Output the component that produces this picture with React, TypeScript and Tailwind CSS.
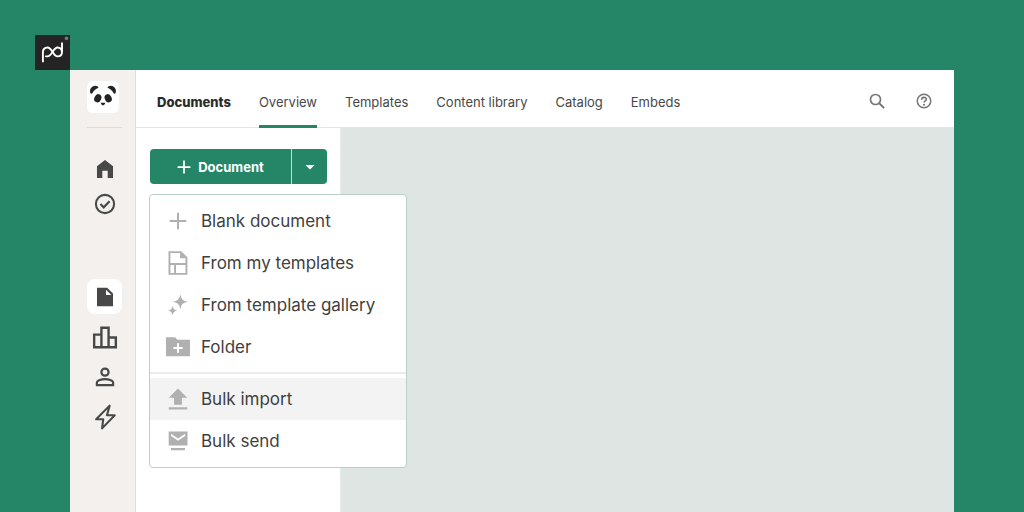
import type { ReactNode } from 'react';

type IconProps = { children: ReactNode; className?: string };

function Icon({ children, className = 'size-6' }: IconProps) {
  return (
    <svg viewBox="0 0 24 24" fill="currentColor" aria-hidden="true" className={`shrink-0 ${className}`}>
      {children}
    </svg>
  );
}

function BrandLogo() {
  return (
    <svg viewBox="0 0 35 35" role="img" aria-label="PandaDoc" className="block size-[35px] bg-[#242424]">
      <g fill="none" stroke="#fff" strokeWidth="1.900">
        <path d="M7.900 27.200V17c0-2.700 1.900-4.500 4.400-4.500 5.200 0 5.400 8.900 10.400 8.900 2.600 0 4.300-1.900 4.300-4.400V7.600" />
        <path d="M27 17c0-2.700-1.800-4.500-4.300-4.500-5 0-5.200 8.900-10.400 8.900-.9 0-1.500-.1-2.100-.4" />
      </g>
      <circle cx="31.500" cy="3.300" r="1.400" fill="#777" stroke="#999" strokeWidth=".6" />
    </svg>
  );
}

function Panda() {
  return (
    <svg viewBox="0 0 32 32" role="img" aria-label="Home workspace" className="block size-8 rounded-md bg-white">
      <g fill="#242424">
        <path d="M3.500 12.300C2 8.500 4.500 4.800 8.200 4.700c1.800 0 3 .8 3.300 2C8.800 7.800 6.400 9.500 5.400 12.300c-.6.500-1.400.500-1.900 0Z" />
        <path d="M28.500 12.300c1.500-3.800-1-7.500-4.700-7.600-1.800 0-3 .8-3.300 2 2.700 1.100 5.100 2.800 6.100 5.600.6.500 1.400.500 1.900 0Z" />
        <ellipse cx="10.800" cy="17.300" rx="3.400" ry="4.200" transform="rotate(28 10.800 17.300)" />
        <ellipse cx="21.200" cy="17.300" rx="3.400" ry="4.200" transform="rotate(-28 21.200 17.300)" />
        <path d="M13.800 21.800h4.400c0 1.300-1.200 2.400-2.200 2.700-1-.3-2.200-1.400-2.200-2.700Z" />
      </g>
    </svg>
  );
}

type SideButtonProps = { label: string; children: ReactNode; className?: string };

function SideButton({ label, children, className = 'h-[35px]' }: SideButtonProps) {
  return (
    <button type="button" aria-label={label} className={`flex w-full items-center justify-center ${className}`}>
      <Icon className="size-[26px]">{children}</Icon>
    </button>
  );
}

function Sidebar() {
  return (
    <aside className="w-[66px] shrink-0 border-r border-[#dfdcda] bg-[#f3f0ed] pl-[17px] pt-[11px] text-[#484848]">
      <nav aria-label="Main" className="flex w-[35px] flex-col">
        <Panda />
        <hr className="mt-[14px] border-[#dedbd8]" />
        <div className="mt-[23px]">
          <SideButton label="Home">
            <path d="M12 3.800 4.600 9.500v10.800h4.900v-6.700h5v6.700h4.900V9.500z" />
          </SideButton>
          <SideButton label="Tasks">
            <circle cx="12" cy="12" r="8.400" fill="none" stroke="currentColor" strokeWidth="1.900" />
            <path d="m7.800 12.100 3 3 5.400-5.600" fill="none" stroke="currentColor" strokeWidth="2" />
          </SideButton>
        </div>
        <div className="mt-[58px]">
          <SideButton label="Documents" className="h-[35px] rounded-lg bg-white">
            <path fillRule="evenodd" d="M4.600 3.500h9.400l5.400 5.300v11.700H4.600zM12.900 5.200v4.900h5z" />
          </SideButton>
        </div>
        <div className="mt-[3px]">
          <SideButton label="Reports" className="h-10">
            <path
              d="M2 9.800h6.700V21.500H2zM8.700 3.500h6.600v18H8.700zM15.300 12.500h6.700v9h-6.700z"
              fill="none"
              stroke="currentColor"
              strokeWidth="2.200"
            />
          </SideButton>
          <SideButton label="Contacts" className="h-10">
            <circle cx="12" cy="7.500" r="3.300" fill="none" stroke="currentColor" strokeWidth="2" />
            <path
              d="M4.500 19.500v-2.200c0-2.400 4.500-3.400 7.500-3.400s7.500 1 7.500 3.400v2.200z"
              fill="none"
              stroke="currentColor"
              strokeWidth="2"
            />
          </SideButton>
          <SideButton label="Automations" className="h-10">
            <path
              d="M16.300 1.500 3.800 14h6.600L9.300 22.500 21 10.400h-7.200z"
              fill="none"
              stroke="currentColor"
              strokeWidth="1.900"
              strokeLinejoin="round"
            />
          </SideButton>
        </div>
      </nav>
    </aside>
  );
}

const TABS = ['Overview', 'Templates', 'Content library', 'Catalog', 'Embeds'];

function TopBar() {
  return (
    <header className="flex h-[58px] shrink-0 border-b border-[#e4e6e5] bg-white pl-[21px] pr-[21px]">
      <nav aria-label="Documents" className="-mb-px flex gap-7 text-[13px] text-[#484848]">
        <h1 className="flex items-center pt-2 font-extrabold text-[#2b2b2b]">Documents</h1>
        {TABS.map((tab, index) => (
          <a
            key={tab}
            href="#"
            aria-current={index === 0 ? 'page' : undefined}
            className={`flex items-center whitespace-nowrap border-b-[3px] pt-[11px] ${
              index === 0 ? 'border-[#258667]' : 'border-transparent'
            }`}
          >
            {tab}
          </a>
        ))}
      </nav>
      <div className="ml-auto flex items-center gap-[29px] pt-[5px] text-[#757575]">
        <button type="button" aria-label="Search">
          <Icon className="size-[18px]">
            <circle cx="10" cy="10" r="6.700" fill="none" stroke="currentColor" strokeWidth="2.200" />
            <path d="m15 15 6.500 6.500" stroke="currentColor" strokeWidth="2.500" />
          </Icon>
        </button>
        <button type="button" aria-label="Help">
          <Icon className="size-[18px]">
            <circle cx="12" cy="12" r="9" fill="none" stroke="currentColor" strokeWidth="2" />
            <path
              d="M8.900 10.200c0-4 6.300-4 6.300-.4 0 2.100-3.100 2.100-3.100 4.200"
              fill="none"
              stroke="currentColor"
              strokeWidth="2.100"
            />
            <circle cx="12.100" cy="16.900" r="1.400" />
          </Icon>
        </button>
      </div>
    </header>
  );
}

type MenuItemProps = { label: string; active?: boolean; children: ReactNode };

function MenuItem({ label, active = false, children }: MenuItemProps) {
  return (
    <button
      type="button"
      role="menuitem"
      className={`flex h-[42px] w-full items-center gap-[11px] whitespace-nowrap pl-4 text-left text-[#3f3f3f] ${
        active ? 'bg-[#f3f3f3]' : 'bg-white'
      }`}
    >
      <Icon className="size-6 text-[#b0b0b0]">{children}</Icon>
      <span className="pt-[2px]">{label}</span>
    </button>
  );
}

function CreateMenu() {
  return (
    <div
      role="menu"
      className="absolute -left-px top-full z-10 mt-[10px] w-[258px] rounded-[4px] border border-[#b9d0c8] bg-white py-[5px] text-[17px]"
    >
      <MenuItem label="Blank document">
        <path d="M11 3.700h2V11h7.300v2H13v7.300h-2V13H3.700v-2H11z" />
      </MenuItem>
      <MenuItem label="From my templates">
        <path
          fillRule="evenodd"
          d="M2.500.200h12.700l6.200 6v17.600H2.500zM4.400 2.100v10h15.100V7.300h-5.400V2.100zM4.400 14v7.900h3.700V14zM10 14v7.900h9.500V14z"
        />
      </MenuItem>
      <MenuItem label="From template gallery">
        <path d="M14.300 1c.8 5.200 2.400 6.900 7.700 7.800-5.300.9-6.900 2.700-7.700 7.700-.8-5-2.400-6.800-7.700-7.700C11.900 7.900 13.500 6.200 14.300 1Z" />
        <path d="M6.600 12.700c.5 3.100 1.700 4.300 4.800 4.900-3.100.6-4.300 1.800-4.800 5-.5-3.200-1.700-4.400-4.800-5 3.100-.6 4.300-1.800 4.800-4.900Z" />
      </MenuItem>
      <MenuItem label="Folder">
        <path
          fillRule="evenodd"
          d="M0 2.300h9l2.500 2.500H24v16.500H0zM11 8.300v3.600H7.300v2H11v3.800h2v-3.800h3.700v-2H13V8.300z"
        />
      </MenuItem>
      <hr className="my-1 border-t-2 border-[#ececec]" />
      <MenuItem label="Bulk import" active>
        <path d="m12 1.500 9.200 9.200h-5.300v7H8.100v-7H2.800zM2.700 20.300h18.600v2.100H2.700z" />
      </MenuItem>
      <MenuItem label="Bulk send">
        <path
          fillRule="evenodd"
          d="M2.700 2.500h18.800v14H2.700zM5 4.800v2.300l7.100 4.700 7-4.700V4.800l-7 4.600zM5 19h14v2.200H5z"
        />
      </MenuItem>
    </div>
  );
}

function CreateButton() {
  return (
    <div className="relative flex h-[35px] w-[177px] text-white">
      <button
        type="button"
        className="flex flex-1 items-center justify-center gap-[7px] rounded-l-[4px] bg-[#258667] text-[13px] font-bold"
      >
        <Icon className="size-[14px]">
          <path d="M10.500 1h3v9.500H23v3h-9.500V23h-3v-9.500H1v-3h9.500z" />
        </Icon>
        <span className="pt-[2px]">Document</span>
      </button>
      <button
        type="button"
        aria-label="More ways to create"
        aria-haspopup="menu"
        aria-expanded="true"
        className="flex w-9 items-center justify-center rounded-r-[4px] border-l border-[#c3ddd4] bg-[#258667]"
      >
        <Icon className="size-[10px]">
          <path d="M1 7h22L12 18z" />
        </Icon>
      </button>
      <CreateMenu />
    </div>
  );
}

export default function App() {
  return (
    <div className="flex min-h-screen flex-col bg-[#258667] font-['Inter','Liberation_Sans',sans-serif]">
      <div className="pl-[35px] pt-[35px]">
        <BrandLogo />
      </div>
      <div className="mx-[70px] flex flex-1 bg-white">
        <Sidebar />
        <div className="flex min-w-0 flex-1 flex-col">
          <TopBar />
          <main className="flex flex-1">
            <section className="w-[205px] shrink-0 border-r border-[#e6eae8] bg-white pl-[14px] pt-[21px]">
              <CreateButton />
            </section>
            <section className="flex-1 bg-[#dee5e3]" />
          </main>
        </div>
      </div>
    </div>
  );
}
